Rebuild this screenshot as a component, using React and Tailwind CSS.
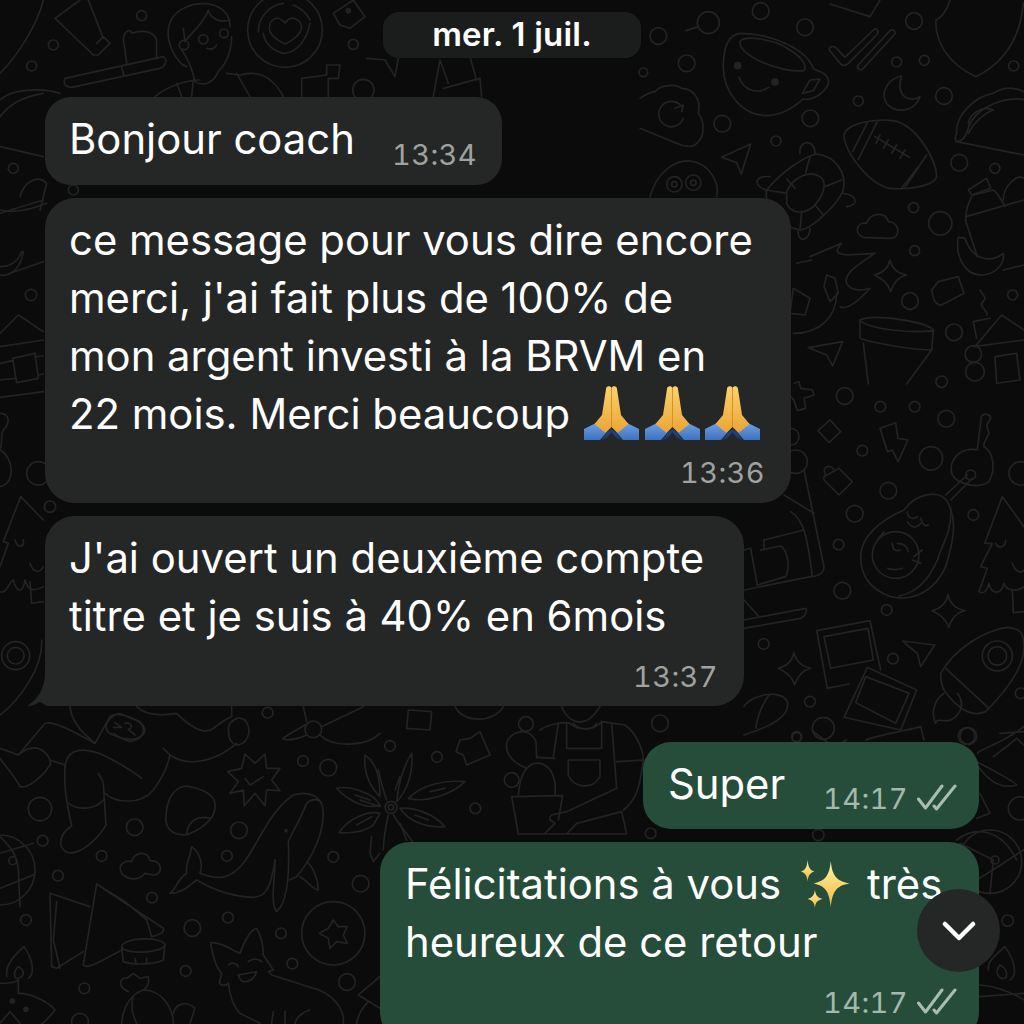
import React from "react";

const Dots = ({ list }) => list.map(([x, y, r, f], i) => <circle key={i} cx={x} cy={y} r={r} fill={f ? "#232323" : "none"} />);

function Group({ x, y, paths, circles }) {
  return (
    <g transform={`translate(${x},${y}) scale(0.3333)`} strokeWidth="5">
      {paths.map((d, i) => <path key={i} d={d} />)}
      <Dots list={circles} />
    </g>
  );
}

const z5 = {
  x: 640, y: 0,
  circles: [[205,68,33],[362,33,25],[495,82,25],[55,108,25],[140,190,25],[10,217,13],[822,63,25],[770,186,15],[853,181,15],[1121,198,15],[655,303,15],[912,288,25],[247,371,25],[511,355,25],[408,423,15],[958,488,25],[1065,505,15],[821,623,15],[901,670,35],[824,752,15],[810,903,25],[1118,885,15],[942,997,25],[905,1145,17],[293,197,9,1],[405,246,9,1],[103,553,23],[103,553,8],[160,548,23],[160,548,8],[1000,1062,25],[1005,1115,28]],
  paths: [
    "M138,92 L175,80",
    "M300,100 C260,105 250,150 250,200 C250,270 300,345 380,347 C430,347 470,315 490,297 C530,305 570,260 565,240 C560,215 530,215 520,205 C500,150 400,100 300,100Z",
    "M300,125 C310,105 400,115 450,150 C490,175 505,205 490,212 C430,220 295,170 300,125Z",
    "M297,232 C310,270 350,285 387,262", "M487,280 L510,240 L540,237 L520,272Z",
    "M568,150 C565,140 580,135 590,145 L615,172 L700,90 C710,80 720,95 710,105 L625,190 C615,200 605,195 600,190Z",
    "M655,195 L750,92 C760,85 770,95 762,105 L670,205 C660,215 648,205 655,195Z",
    "M0,295 C15,285 30,275 45,275 C60,255 105,250 125,265 C160,265 185,300 175,340 C195,365 195,410 170,430 C160,445 130,440 110,430 L0,385",
    "M125,320 A38,38 0 1 0 130,355", "M105,325 L130,315 L125,335",
    "M245,472 L332,432 L304,522 L290,488Z",
    "M785,228 C745,235 725,275 735,300 C750,340 820,345 840,290 C810,310 765,290 785,228Z",
    "M930,0 C925,20 910,50 888,60 C885,120 920,190 1008,230 C1090,190 1140,120 1150,10",
    "M570,12 L690,50 L720,0",
    "M612,405 C620,370 700,355 760,362 C830,375 890,480 890,530 C880,560 800,570 750,565 C690,555 615,460 612,405Z",
    "M682,368 L638,455 M712,365 L655,478 M860,465 L795,563 M835,500 L785,565",
    "M705,410 L808,472 M720,405 L708,430 M745,420 L730,445 M770,435 L755,460 M795,450 L780,475",
    "M440,575 C460,530 510,510 540,530 C565,545 550,590 520,620 C490,645 450,640 440,610Z",
    "M380,570 C420,520 490,470 530,462 C590,470 620,520 610,570 C590,620 510,690 480,690 C420,680 370,620 380,570Z",
    "M480,460 C475,420 525,415 525,460", "M380,570 C340,560 340,525 390,530", "M610,580 C650,585 660,615 620,620", "M475,690 C470,730 510,725 510,685",
    "M440,537 L465,565 M510,470 L497,518 M380,570 L440,580 M525,615 L550,645 M485,635 L480,690 M555,560 L605,540",
    "M30,590 C50,520 100,480 150,483 C210,490 240,550 230,590",
    "M950,400 C945,350 1000,290 1060,280 C1100,255 1130,265 1152,275", "M950,425 L1152,465",
    "M1152,298 C1080,290 1000,330 985,385 C975,420 960,425 950,425 C945,425 945,410 950,400",
    "M985,370 C990,340 1030,315 1060,330 C1030,340 1000,370 985,400",
    "M985,570 L1040,535 L1052,565 L995,585Z",
    "M995,590 C980,620 975,640 978,665 L1012,770 M1000,585 L1060,570 C1075,580 1090,610 1095,620 M978,650 L1152,600 M1090,810 L1152,795",
    "M1090,600 C1090,560 1130,520 1152,535",
    "M955,712 C945,760 970,830 1030,825 C1070,820 1095,790 1090,760 C1060,785 1000,790 975,715Z",
    "M670,712 C640,700 650,665 680,670 C690,635 740,635 745,665 C780,665 785,715 750,715Z",
    "M750,780 C755,805 775,820 800,825 C775,830 760,850 752,875 C745,850 725,835 703,825 C725,820 745,805 750,780Z",
    "M875,870 L895,845 L955,830 L972,880 L905,915 C885,915 880,900 875,870Z",
    "M1020,870 C1030,890 1045,890 1025,910 C1020,920 1040,930 1042,945",
    "M1000,965 L1050,955 M1000,965 L1010,1015 M1005,1040 L1085,945 L1152,990 M1000,1040 L1152,1020 M1065,1070 L1130,1060 L1140,1140 L1070,1150Z",
    "M660,960 C700,940 860,965 880,990 L875,1050 L800,1152 M660,960 L660,1015 C700,1030 820,1050 875,1050 M670,1030 L685,1152 M665,965 C700,990 820,1000 880,992",
    "M505,1043 L608,1025 L578,1098 L560,1065Z",
    "M590,880 C590,950 540,1000 460,1000", "M560,825 L585,835 L595,880 L570,905 L552,860Z", "M460,865 L510,895 L495,945 L450,940Z", "M470,790 L515,780",
    "M510,770 L605,730 C590,750 580,760 620,765 L705,760 C660,790 610,820 620,850 C630,870 660,875 690,865 C650,910 620,930 600,920",
  ],
};

const star = (x, y, s = 1) => `M${x},${y-48*s} C${x+5*s},${y-22*s} ${x+25*s},${y-6*s} ${x+50*s},${y} C${x+25*s},${y+6*s} ${x+10*s},${y+25*s} ${x+2*s},${y+50*s} C${x-5*s},${y+25*s} ${x-25*s},${y+10*s} ${x-47*s},${y} C${x-25*s},${y-6*s} ${x-5*s},${y-22*s} ${x},${y-48*s}Z`;

const z6 = {
  x: 744, y: 380,
  circles: [[302,48,25],[409,80,16],[512,80,16],[607,116,25],[355,212,16],[561,235,35],[433,332,25],[688,405,16],[332,401,25],[284,494,16],[295,632,25],[428,690,16],[59,792,16],[447,836,16],[198,965,16],[238,1045,33],[668,1068,25],[158,1072,14],[830,280,35],[680,285,15],[455,525,70],[760,828,45],[760,828,28],[155,245,35],[140,170,25],[830,940,16]],
  paths: [
    "M150,10 L165,5 L170,25 L205,30 L210,45 L180,55 L185,85 L160,92 L150,60 L140,50",
    "M258,120 L290,155 L255,188 L222,152Z",
    "M408,145 L455,128 L462,175 L492,180 L462,245 L445,210 L430,215Z",
    "M240,290 L285,265 L325,305 L285,345 L240,300Z", "M245,285 C230,260 260,250 270,270",
    "M700,210 L712,110 C720,95 740,105 740,115 L728,135 L735,160 L720,190 L720,200 C750,215 755,270 735,305 C700,330 640,310 625,285 C610,240 650,200 700,210Z",
    "M605,345 L670,285 M620,360 L685,295",
    "M350,530 C350,470 410,420 480,390 C520,335 590,330 610,365 C640,420 630,480 605,560 C570,640 500,665 440,650 C385,630 350,590 350,530Z",
    "M620,385 C625,450 600,480 580,540 C550,610 510,640 465,648",
    "M430,565 C440,570 460,570 475,565", "M445,490 C445,510 455,515 470,510", "M460,490 C480,490 490,500 492,515",
    "M490,395 C490,415 510,420 520,410 M490,425 C500,445 520,445 530,430 M530,415 C535,435 545,440 553,435",
    "M400,480 L420,455 M510,530 L535,510 M505,540 L530,550",
    "M775,350 L840,440 M775,350 L722,490 L745,490 L710,560 L730,565 L705,635 C720,645 730,630 735,610 C740,640 770,650 780,610 C790,640 830,630 840,620",
    "M805,630 L808,698 L840,695", "M755,490 C765,510 785,500 785,480", "M805,550 C815,580 835,580 840,570",
    "M590,880 C630,810 720,750 790,742 C830,745 840,760 840,800 C840,870 770,950 725,995 C690,1010 650,1000 600,930 C590,910 590,895 590,880Z",
    "M605,865 L735,985", "M600,940 C570,960 560,1000 575,1030 C580,1010 600,1030 620,1020 C650,1005 665,970 640,940",
    "M218,752 L378,722 L410,870 M218,752 L250,925 L315,912", "M240,770 L372,745 L388,840 L260,865Z",
    "M370,862 L518,930 L470,1050 L300,1012Z", "M365,890 L495,940 L455,1030 L335,968Z",
    star(612,692), star(150,865),
    "M475,783 L572,795 L530,860 L520,820Z",
    "M180,270 L240,560 C240,580 220,590 200,590 L0,630", "M120,345 L210,400", "M140,395 C180,420 190,470 205,590",
    "M60,480 L180,450", "M60,480 L60,510", "M0,510 L20,505 L40,615", "M50,510 L110,498 C130,510 140,560 125,590 L40,615",
    "M0,745 L170,715 C185,710 190,690 185,685 L0,720", "M0,660 L45,710",
    "M0,980 C20,945 110,925 130,965 C140,1010 80,1040 0,1065", "M75,945 C50,980 40,1010 35,1045",
    "M365,1080 C420,1060 500,1050 530,1040 L540,1080", "M700,1120 C720,1100 760,1100 840,1040",
  ],
};

const z4 = {
  x: 0, y: 640,
  circles: [[47,47,42],[47,47,25],[120,507,35],[404,562,25],[128,602,16],[305,648,16],[174,707,16],[456,773,16],[78,840,16],[253,1045,16],[557,993,16],[240,1145,25],[803,218,16],[909,363,16],[985,383,25],[717,571,25],[681,648,16],[1000,651,16],[1082,731,25],[577,864,25],[684,833,16],[843,880,16],[877,971,16],[1041,1026,25],[1000,880,95],[940,268,25],[38,662,12],[0,690,105],[37,1083,6,1],[78,1108,6,1],[858,572,3,1]],
  paths: [
    "M125,0 C130,80 60,180 0,225",
    "M210,200 C215,250 250,280 285,310",
    "M285,310 L330,230 C350,210 430,240 435,270 C430,300 380,310 340,280",
    "M285,310 C230,280 160,240 135,250 L55,345 L0,325",
    "M55,345 C120,290 160,360 150,375 C120,420 80,445 60,440 C40,400 0,360 0,355",
    "M150,360 L195,375",
    "M195,380 C200,320 260,320 320,350 C370,375 420,410 425,415",
    "M195,380 C190,450 205,510 215,558 C180,580 170,620 200,637 C240,650 300,590 318,555 L310,430 C305,410 295,405 295,400",
    "M205,490 C240,515 290,505 310,480",
    "M315,460 C340,485 420,500 460,450 C490,410 505,370 510,345 C560,380 640,370 710,310", "M490,325 L510,345",
    "M410,200 C440,230 500,225 530,220 C560,250 610,290 640,265 C660,250 680,235 695,230 L695,200",
    "M685,270 C685,245 710,225 735,240 C755,265 750,305 715,315 C695,315 685,295 685,270Z",
    "M683,395 L725,385 L735,342 L765,370 L795,342 L800,385 L840,385 L815,420 L840,452 L800,450 L795,497 L765,460 L733,497 L730,450 L690,460 L715,425Z",
    "M735,415 L750,435 L790,410",
    "M498,530 C500,480 520,440 560,438 C600,445 640,460 645,490 C650,530 620,560 560,585 C520,585 495,570 498,530Z",
    "M560,580 C565,545 590,525 630,535",
    "M510,760 C540,760 560,745 590,720 C640,750 700,770 760,772 C790,770 810,760 825,660",
    "M575,620 C600,640 610,670 600,700 C650,720 690,720 730,670 C770,620 810,510 880,465 C930,450 970,470 970,520 C970,580 940,650 890,710 L868,720",
    "M575,620 C570,660 555,670 560,700 C530,720 530,745 510,760",
    "M825,660 C825,720 810,790 830,815 C860,790 870,720 865,605 C870,590 900,540 920,490 C935,475 955,475 965,490",
    "M900,710 C920,720 940,750 955,750 C955,720 940,680 920,665",
    "M365,700 C350,670 380,660 395,665 C400,635 445,630 450,662 C490,660 490,705 460,705 L435,700 C420,720 390,725 365,700Z",
    "M150,760 L155,980 L170,985 L250,935 M150,760 L270,800 M170,785 L160,900 L180,985",
    "M290,732 L250,975 C260,990 300,965 365,930 M290,732 L490,865 C495,875 480,885 455,890 L440,840 L375,785 L290,732",
    "M365,920 C370,890 490,890 495,915 C490,940 370,945 365,920Z", "M365,920 L370,965 C400,975 460,975 490,960 L495,915",
    "M405,955 L408,970 M440,955 L440,970",
    "M0,590 C30,620 50,640 55,690 L60,800 M0,640 L100,610 M0,745 L100,705",
    "M20,1010 C15,970 50,940 72,920 C100,960 105,1000 85,1015 M55,980 C35,1000 45,1020 55,1015 C75,1010 75,990 55,980",
    "M0,1030 C30,1030 50,1025 55,1020 L55,1060 C100,1060 150,1090 165,1110 C150,1130 130,1150 125,1152", "M0,1150 L30,1115 L60,1150",
    "M365,1150 C370,1090 400,1060 430,1050 C490,1050 520,1110 520,1150",
    "M385,1055 C350,1040 360,1010 380,1015 L400,1000 L420,1015 L445,1010 C450,1030 440,1045 430,1050",
    "M400,1070 C390,1100 400,1130 410,1150", "M520,1120 C530,1085 565,1085 585,1105 L570,1150",
    "M632,908 C670,905 700,935 720,940 C735,900 750,870 770,865 C790,900 790,940 790,945 L820,990 L805,995 L815,1005 L940,1045 C1000,1060 1035,1110 1030,1150",
    "M632,908 C640,960 655,990 665,1000 L658,1030 C670,1040 680,1035 685,1030 C690,1070 700,1100 720,1120 L780,1150",
    "M685,975 C695,965 710,970 715,980 M745,965 C755,955 775,955 785,965 M715,1005 L770,995 C760,1025 725,1040 715,1005",
    "M815,1150 L820,1115 M855,1150 L855,1115 M885,1150 C890,1130 910,1115 930,1110",
    "M1000,840 L1015,860 L1042,860 L1030,885 L1042,910 L1010,905 L990,925 L985,895 L958,880 L985,865Z",
    "M1010,445 C1050,435 1120,460 1140,495 C1100,510 1040,480 1010,445Z",
    "M1018,578 C1040,540 1100,510 1140,520 L1120,555 C1090,580 1050,580 1018,578Z",
    "M1095,345 C1130,370 1140,410 1140,470 C1110,440 1090,400 1095,345Z",
    "M1065,465 L1110,480 M1070,555 L1115,530", "M1115,590 L1110,640 L1120,665 L1140,640",
    "M1075,1065 L1140,1010 M1075,1065 L1140,1105 M1070,1150 C1075,1120 1090,1100 1105,1085",
    "M915,255 C890,270 860,285 848,297 C870,305 910,290 920,285", "M965,260 L1090,200", "M960,285 C1000,325 1100,320 1140,280", "M910,200 L920,245",
    "M320,250 C330,230 350,215 370,225 L420,245 C440,265 430,300 390,305 L340,285 C320,280 315,265 320,250Z",
    "M345,248 L365,262 L340,262 M375,250 C395,245 400,265 385,268 L405,285",
  ],
};

const z8 = {
  x: 380, y: 700,
  circles: [[33,322,18],[33,322,8],[30,138,16],[171,171,16],[286,325,16],[812,400,16],[840,70,25],[438,72,22],[395,240,22]],
  paths: [
    "M50,305 C55,250 70,200 95,160 C100,210 85,270 50,305", "M60,230 L45,270",
    "M85,295 C130,250 200,240 255,245 C220,280 140,310 85,295", "M150,275 L195,265",
    "M60,325 C100,320 160,340 195,380 C150,385 90,370 60,325", "M105,345 L145,360",
    "M40,345 C60,380 90,410 100,430 M60,370 L80,420", "M25,345 C15,390 10,420 10,450",
    "M20,300 C5,260 0,230 -5,210 M0,320 L-60,300",
    "M85,30 L155,35 L150,90 L80,85Z",
    "M240,120 L270,115 L300,95 L330,165 L260,195 L250,165 L228,155 L240,120",
    "M225,20 C250,70 340,70 370,20",
    "M535,70 L520,170 M560,70 L560,145 L665,145 L665,70",
    "M480,90 C510,70 560,65 570,70 C590,90 640,95 665,65 L735,75 C770,100 790,150 790,180 C780,260 770,300 730,330",
    "M695,70 L710,265 L560,335 L515,345 C500,360 520,365 525,370 L495,400",
    "M565,180 L660,180 L660,230 C640,270 580,265 565,225Z", "M710,185 L790,180",
    "M415,285 C420,210 450,185 480,190 C510,195 530,230 525,285", "M470,172 L525,175",
    "M440,205 C400,190 375,160 380,130 C390,90 450,80 468,125 L470,175",
    "M395,290 L548,287 L535,360 M395,290 L415,402 L740,402 L725,335 L590,370 L560,402",
    "M545,20 C560,60 610,100 660,20", "M580,70 C600,95 640,90 650,70",
  ],
};

const z1 = {
  x: 0, y: 0,
  circles: [[425,47,15],[160,135,15],[95,198,15],[1060,133,15],[40,505,15],[220,570,15],[610,118,14],[672,100,13],[552,135,14],[855,90,112],[1045,32,6,1],[1090,270,32]],
  paths: [
    "M165,55 L240,0 M165,55 L280,165 L295,165 L330,130 L310,110 L290,130 M310,115 L265,0",
    "M195,235 L490,170 C505,180 495,200 480,205 L215,262 C190,260 190,245 195,235Z", "M365,200 L372,228",
    "M380,190 L370,115 C375,90 395,85 395,100 C420,90 460,90 470,120 L470,175",
    "M505,90 C510,30 580,0 640,15 C670,25 690,45 690,80", "M550,85 L555,125 C570,100 610,75 625,30 C630,55 660,70 690,60",
    "M545,150 C560,170 575,200 585,245 C610,260 640,250 655,215 C680,190 695,150 695,110",
    "M620,145 C635,150 645,145 650,135", "M505,90 C500,130 530,190 560,200",
    "M465,290 C500,260 560,240 600,240 M580,240 L575,290 M530,250 L545,290 M680,220 L720,225 C790,205 830,250 850,290 M710,220 L750,290",
    "M790,100 C795,130 815,150 850,160 C885,160 920,125 930,70", "M775,95 C775,50 810,15 850,10 M880,15 C905,25 920,40 930,60",
    "M855,70 C835,40 800,60 810,95 C820,115 840,125 855,132 C880,120 900,105 905,85 C905,60 875,40 855,70Z",
    "M1000,40 L1060,0 L1095,50 L1050,85 L1020,75Z",
    "M905,290 L905,235 L980,225 L980,195 L1020,195 L1015,235 L985,235 L985,290",
    "M1100,175 L1155,180 L1185,230 L1195,175",
    "M1300,290 L1320,180 L1345,250", "M1330,265 L1440,235 L1445,290", "M1410,170 L1430,240",
    "M130,0 C110,80 50,170 0,220",
    "M0,300 C30,270 120,260 180,280", "M130,280 C70,290 30,310 0,350", "M0,440 L130,470",
    "M0,640 L130,600", "M60,590 C70,550 110,520 140,550 L120,630",
  ],
};

const z7 = {
  x: 0, y: 190,
  circles: [[93,315,17],[150,950,17],[115,850,35]],
  paths: [
    "M65,185 C50,225 20,230 0,230 M70,185 C60,245 25,260 0,255", "M30,250 L130,215",
    "M0,430 L55,375 L130,425", "M0,470 L130,450", "M38,505 L105,490 L115,565 L50,578Z",
    "M0,520 L38,512 M105,500 L130,498 M0,570 L45,565 M115,555 L130,552 M0,622 L130,605",
    "M0,670 C30,670 30,700 10,720 C0,740 10,750 0,780 C40,800 50,880 0,890",
    "M62,920 L130,990 M62,920 L10,1055 L25,1060 L0,1130 M0,1205 C20,1215 30,1170 40,1170 C50,1210 70,1210 75,1170 C85,1210 110,1200 130,1190",
    "M90,1175 L95,1240 L130,1235", "M45,1050 C55,1080 75,1070 70,1050", "M90,1120 C100,1150 120,1150 130,1130",
    "M0,60 C40,70 90,60 140,40",
  ],
};

const z3 = {
  x: 760, y: 730,
  circles: [[743,572,17],[175,315,17],[625,18,25],[110,20,15],[780,235,35],[690,395,95],[705,390,12]],
  paths: [
    "M590,330 C640,290 720,290 770,390", "M615,470 C670,440 730,400 790,360", "M600,340 L700,390 L690,490",
    "M685,720 C680,690 720,665 735,650 C770,700 770,740 750,750", "M720,705 C700,730 720,750 735,745 C745,735 740,715 720,705",
    "M660,765 C720,770 760,790 792,810", "M660,800 L792,790",
    "M700,80 L740,50 L770,25 L792,45", "M640,90 C700,120 770,160 770,165 C720,180 680,150 640,90",
    "M660,190 L690,250 L650,265", "M720,10 L792,5", "M160,5 L220,50 L260,30",
  ],
};

function Wallpaper() {
  return (
    <svg className="absolute inset-0" width="1024" height="1024" viewBox="0 0 1024 1024" fill="none" stroke="#232323" strokeLinecap="round" strokeLinejoin="round">
      {[z1, z4, z5, z6, z7, z8, z3].map((g, i) => <Group key={i} {...g} />)}
    </svg>
  );
}

function Pray() {
  return (
    <svg width="55" height="54" viewBox="0 0 55 54" className="inline-block shrink-0">
      <defs>
        <linearGradient id="py" x1="0" y1="0" x2="0" y2="1">
          <stop offset="0" stopColor="#fbd36b" />
          <stop offset="1" stopColor="#eba435" />
        </linearGradient>
        <linearGradient id="pb" x1="0" y1="0" x2="0" y2="1">
          <stop offset="0" stopColor="#6da0e0" />
          <stop offset="1" stopColor="#3e72c0" />
        </linearGradient>
      </defs>
      <path d="M0,43 L12,37 L22,47 L16,54 L0,54Z M55,43 L43,37 L33,47 L39,54 L55,54Z" fill="url(#pb)" />
      <path d="M17,54 C20,52 22,49 22,47 L27.5,43 L33,47 C33,49 35,52 38,54 C33,53 30,50 27.5,46 C25,50 22,53 17,54Z" fill="#1d3f85" />
      <path d="M22,3 C22,-0.5 26.5,-0.5 27.5,2 C28.5,-0.5 33,-0.5 33,3 L37,29 L44.5,38 L33.5,47 L27.5,41 L21.5,47 L10.5,38 L18,29Z" fill="url(#py)" />
      <path d="M27.5,2 L27.5,41" stroke="#d98f2c" strokeWidth="1" fill="none" />
    </svg>
  );
}

function Sparkles() {
  return (
    <svg width="52" height="48" viewBox="120 385 155 145" className="inline-block shrink-0">
      <defs>
        <linearGradient id="sp" x1="0" y1="0" x2="0" y2="1">
          <stop offset="0" stopColor="#fff2a8" />
          <stop offset="1" stopColor="#f3b93f" />
        </linearGradient>
      </defs>
      <path d="M215,388 C219,430 230,448 272,456 C232,462 220,480 215,527 C210,480 200,464 163,456 C200,448 211,430 215,388Z" fill="url(#sp)" />
      <path d="M145,385 C147,408 152,415 166,420 C152,424 147,432 145,450 C143,432 138,424 124,420 C138,415 143,408 145,385Z" fill="url(#sp)" />
      <path d="M167,475 C169,492 174,498 190,503 C174,507 169,513 167,530 C165,513 160,507 145,503 C160,498 165,492 167,475Z" fill="url(#sp)" />
    </svg>
  );
}

function Ticks() {
  return (
    <svg width="40" height="28" viewBox="0 0 40 28" fill="none" stroke="#a9bdb1" strokeWidth="3" strokeLinecap="round" strokeLinejoin="round" className="shrink-0">
      <path d="M1.5,15 L8.5,24 L25,2" />
      <path d="M17,22 L19.5,25 L38,2" />
    </svg>
  );
}

function Time({ green, children }) {
  return <span className={`text-[29px] leading-[34px] tabular-nums tracking-[0.4px] ${green ? "text-[#a4b8ac]" : "text-[#a0a2a1]"}`}>{children}</span>;
}

export default function App() {
  return (
    <div className="relative w-[1024px] h-[1024px] overflow-hidden bg-[#0b0b0b] font-['Inter',sans-serif] text-white">
      <Wallpaper />
      <div className="relative flex flex-col pt-3 pl-[45px] pr-[45px]">
        <div className="self-center ml-[-45px] mr-[-45px] w-[258px] h-[46px] rounded-[16px] bg-[#1b1d1c] flex items-center justify-center text-[33px] font-semibold tracking-[0.2px]">
          mer. 1 juil.
        </div>

        <div className="mt-[39px] w-[457px] h-[88px] rounded-[26px] bg-[#252726] flex pl-[24px] pr-[25px]">
          <span className="text-[41.8px] leading-[58px] mt-[13px] whitespace-nowrap">Bonjour coach</span>
          <span className="ml-auto mt-[41px]"><Time>13:34</Time></span>
        </div>

        <div className="mt-[13px] w-[746px] h-[305px] rounded-[30px] bg-[#252726] pl-[24px] pr-[26px] pt-[13px] flex flex-col">
          <div className="text-[41.8px] leading-[58px] whitespace-nowrap">ce message pour vous dire encore</div>
          <div className="text-[41.8px] leading-[58px] whitespace-nowrap">merci, j'ai fait plus de 100% de</div>
          <div className="text-[41.8px] leading-[58px] whitespace-nowrap">mon argent investi à la BRVM en</div>
          <div className="text-[41.8px] leading-[58px] whitespace-nowrap flex items-center">
            22 mois. Merci beaucoup
            <span className="flex gap-[5.5px] ml-[14px] mt-[-2px]"><Pray /><Pray /><Pray /></span>
          </div>
          <div className="self-end mt-[13px]"><Time>13:36</Time></div>
        </div>

        <div className="relative mt-[13px] w-[699px] h-[190px] rounded-[30px] rounded-bl-[20px] bg-[#252726] pl-[24px] pr-[26px] pt-[13px] flex flex-col">
          <div className="text-[41.8px] leading-[58px] whitespace-nowrap">J'ai ouvert un deuxième compte</div>
          <div className="text-[41.8px] leading-[58px] whitespace-nowrap">titre et je suis à 40% en 6mois</div>
          <div className="self-end mt-[15px]"><Time>13:37</Time></div>
          <svg className="absolute left-[-18px] bottom-0" width="40" height="34" viewBox="0 0 40 34" fill="#252726">
            <path d="M18,0 L40,0 L40,34 L20,34 C16,32 14,30 12,30 C8,33 4,34 0,34 C10,28 18,18 18,0Z" />
          </svg>
        </div>

        <div className="self-end mt-[36px] w-[336px] h-[87px] rounded-[28px] bg-[#254d39] flex pl-[25px] pr-[22px]">
          <span className="text-[41.8px] leading-[58px] mt-[13px]">Super</span>
          <span className="ml-auto mt-[40px] flex items-start gap-[9px]"><Time green>14:17</Time><span className="mt-[2px]"><Ticks /></span></span>
        </div>

        <div className="self-end mt-[13px] w-[599px] h-[200px] rounded-[30px] bg-[#254d39] pl-[25px] pr-[22px] pt-[13px] flex flex-col shrink-0">
          <div className="text-[41.8px] leading-[58px] whitespace-nowrap flex items-center">
            Félicitations à vous
            <span className="ml-[18px] mr-[16px] flex"><Sparkles /></span>
            très
          </div>
          <div className="text-[41.8px] leading-[58px] whitespace-nowrap">heureux de ce retour</div>
          <div className="self-end mt-[15px] flex items-start gap-[9px]"><Time green>14:17</Time><span className="mt-[2px]"><Ticks /></span></div>
        </div>
      </div>

      <div className="absolute left-[917px] top-[889px] w-[83px] h-[83px] rounded-full bg-[#252726] flex items-center justify-center">
        <svg width="34" height="22" viewBox="0 0 34 22" fill="none" stroke="#ffffff" strokeWidth="4.5" strokeLinecap="round" strokeLinejoin="round">
          <path d="M3,4 L17,18 L31,4" />
        </svg>
      </div>
    </div>
  );
}
